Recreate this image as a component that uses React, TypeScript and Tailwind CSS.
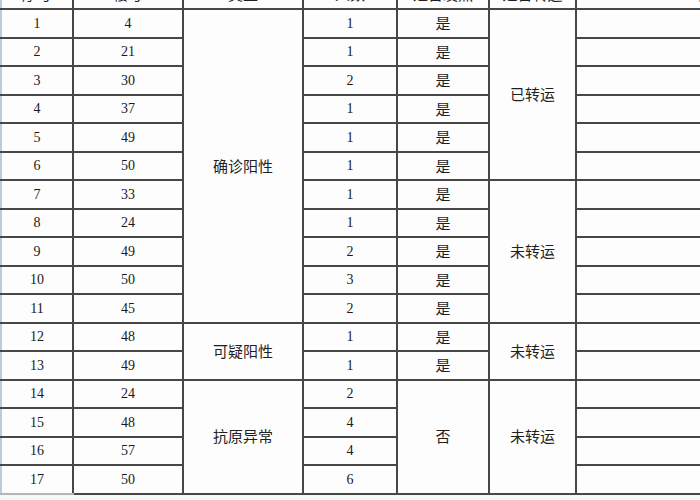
import React from "react";

type Row = { no: number; building: number; count: number };

const rows: Row[] = [
  { no: 1, building: 4, count: 1 },
  { no: 2, building: 21, count: 1 },
  { no: 3, building: 30, count: 2 },
  { no: 4, building: 37, count: 1 },
  { no: 5, building: 49, count: 1 },
  { no: 6, building: 50, count: 1 },
  { no: 7, building: 33, count: 1 },
  { no: 8, building: 24, count: 1 },
  { no: 9, building: 49, count: 2 },
  { no: 10, building: 50, count: 3 },
  { no: 11, building: 45, count: 2 },
  { no: 12, building: 48, count: 1 },
  { no: 13, building: 49, count: 1 },
  { no: 14, building: 24, count: 2 },
  { no: 15, building: 48, count: 4 },
  { no: 16, building: 57, count: 4 },
  { no: 17, building: 50, count: 6 },
];

// merged cells keyed by the row they start on
const typeCells: Record<number, { label: string; span: number }> = {
  1: { label: "确诊阳性", span: 11 },
  12: { label: "可疑阳性", span: 2 },
  14: { label: "抗原异常", span: 4 },
};

const transferCells: Record<number, { label: string; span: number }> = {
  1: { label: "已转运", span: 6 },
  7: { label: "未转运", span: 5 },
  12: { label: "未转运", span: 2 },
  14: { label: "未转运", span: 4 },
};

const cell = "border-2 border-[#474747] text-center align-middle p-0";
const num = "font-['Liberation_Serif','Noto_Sans_CJK_SC',serif] text-[14px] text-[#1a1a1a]";
const cjk = "font-['Noto_Sans_CJK_SC',sans-serif] text-[15px] text-[#1f1f1f]";

export default function App() {
  return (
    <div className="w-[700px] h-[500px] overflow-hidden bg-[#f7f7f7]">
      <table className="table-fixed border-collapse w-[832px] mt-[-21px] bg-[#fdfdfd]">
        <colgroup>
          <col className="w-[72px]" />
          <col className="w-[110px]" />
          <col className="w-[120px]" />
          <col className="w-[94px]" />
          <col className="w-[92px]" />
          <col className="w-[87px]" />
          <col className="w-[257px]" />
        </colgroup>
        <thead>
          <tr className="h-[29px]">
            <th className={`${cell} ${cjk} font-normal border-l-[#bccbd9]`}>序号</th>
            <th className={`${cell} ${cjk} font-normal`}>楼号</th>
            <th className={`${cell} ${cjk} font-normal`}>类型</th>
            <th className={`${cell} ${cjk} font-normal`}>人数</th>
            <th className={`${cell} ${cjk} font-normal`}>是否发热</th>
            <th className={`${cell} ${cjk} font-normal`}>是否转运</th>
            <th className={`${cell} ${cjk} font-normal text-left pl-[120px]`}>备注</th>
          </tr>
        </thead>
        <tbody>
          {rows.map((r) => (
            <tr key={r.no} className="h-[28.5px]">
              <td
                className={`${cell} ${num} border-l-[#bccbd9] ${
                  r.no === 17 ? "border-b-[#b5b5b5]" : ""
                }`}
              >
                {r.no}
              </td>
              <td className={`${cell} ${num}`}>{r.building}</td>
              {typeCells[r.no] && (
                <td className={`${cell} ${cjk}`} rowSpan={typeCells[r.no].span}>
                  {typeCells[r.no].label}
                </td>
              )}
              <td className={`${cell} ${num}`}>{r.count}</td>
              {r.no <= 13 ? (
                <td className={`${cell} ${cjk}`}>是</td>
              ) : r.no === 14 ? (
                <td className={`${cell} ${cjk}`} rowSpan={4}>
                  否
                </td>
              ) : null}
              {transferCells[r.no] && (
                <td className={`${cell} ${cjk}`} rowSpan={transferCells[r.no].span}>
                  {transferCells[r.no].label}
                </td>
              )}
              <td className={cell}></td>
            </tr>
          ))}
        </tbody>
      </table>
    </div>
  );
}
